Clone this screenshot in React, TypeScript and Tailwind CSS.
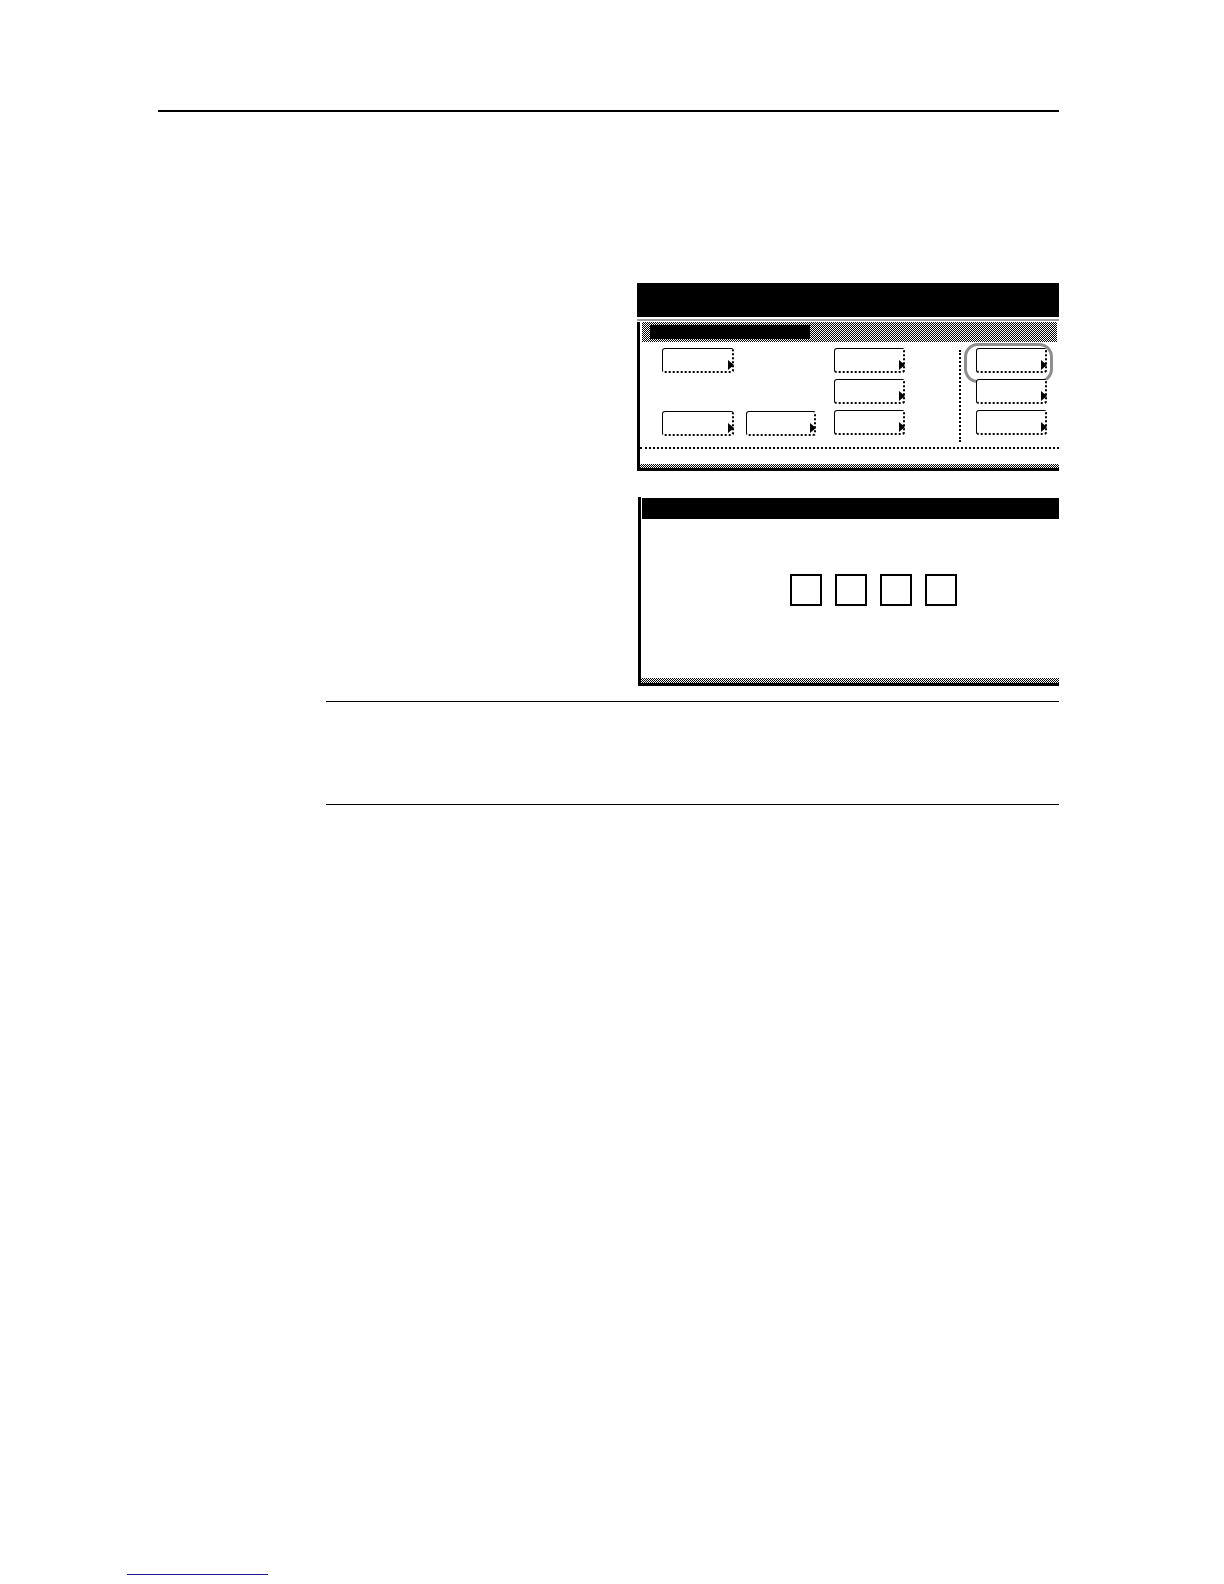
const checker =
  'bg-[image:repeating-conic-gradient(#000_0%_25%,#fff_0%_50%)] bg-[length:2px_2px]';

function Key({ w = 'w-[72px]', highlight = false }: { w?: string; highlight?: boolean }) {
  return (
    <div
      className={`relative h-[25px] ${w} rounded-[3px] border border-black border-b-2 border-r-2 bg-white [border-bottom-style:dotted] [border-right-style:dotted]`}
    >
      <span className="absolute right-[-2px] bottom-[1px] h-0 w-0 border-y-[5px] border-l-[6px] border-y-transparent border-l-black" />
      {highlight && (
        <span className="absolute left-[-13px] top-[-6px] h-[40px] w-[89px] rounded-[14px] border-[3px] border-[#8e8e8e]" />
      )}
    </div>
  );
}

function MenuScreen() {
  return (
    <div className="flex h-[188px] flex-col">
      <div className="h-[34px] bg-black" />
      <div className="h-[2px]" />
      <div className="h-[2px] bg-[#9a9a9a]" />
      <div className="h-[1px]" />
      <div className="flex flex-1 flex-col border-l-[3px] border-black">
        <div className={`mx-[2px] flex h-[20px] items-center ${checker}`}>
          <div className="ml-[8px] h-[14px] w-[160px] bg-black" />
        </div>
        <div className="flex h-[105px] items-start pt-[6px]">
          <div className="ml-[22px] flex flex-col gap-[38px]">
            <Key />
            <Key />
          </div>
          <div className="ml-[12px] mt-[63px]">
            <Key w="w-[70px]" />
          </div>
          <div className="ml-[18px] flex flex-col gap-[6px]">
            <Key w="w-[71px]" />
            <Key w="w-[71px]" />
            <Key w="w-[71px]" />
          </div>
          <div className="ml-[54px] mt-[2px] h-[92px] border-l-2 border-dotted border-black" />
          <div className="ml-[15px] flex flex-col gap-[6px]">
            <Key w="w-[71px]" highlight />
            <Key w="w-[71px]" />
            <Key w="w-[71px]" />
          </div>
        </div>
        <div className="h-[2px] border-t-2 border-dotted border-black" />
        <div className="flex-1" />
        <div className={`h-[4px] ${checker}`} />
        <div className="h-[3px] bg-black" />
      </div>
    </div>
  );
}

function CodeScreen() {
  return (
    <div className="flex h-[189px] flex-col border-l-[3px] border-black">
      <div className="mt-[1px] ml-[1px] h-[21px] bg-black" />
      <div className="flex flex-1 items-start pl-[149px] pt-[55px]">
        <div className="flex gap-[13px]">
          {[0, 1, 2, 3].map((i) => (
            <div key={i} className="h-[32px] w-[32px] border-2 border-black bg-white" />
          ))}
        </div>
      </div>
      <div className={`h-[5px] ${checker}`} />
      <div className="h-[3px] bg-black" />
    </div>
  );
}

export default function App() {
  return (
    <div className="flex h-screen w-full flex-col overflow-hidden bg-white font-['Liberation_Sans',sans-serif]">
      <div className="pl-[158px] pr-[165px] pt-[110px]">
        <div className="h-[2px] bg-black" />
      </div>

      <div className="ml-[637px] mr-[165px] mt-[171px]">
        <MenuScreen />
      </div>

      <div className="ml-[638px] mr-[165px] mt-[26px]">
        <CodeScreen />
      </div>

      <div className="ml-[326px] mr-[165px] mt-[15px] h-px shrink-0 bg-black" />
      <div className="ml-[326px] mr-[165px] mt-[102px] h-px shrink-0 bg-black" />

      <div className="mb-[9px] ml-[127px] mt-auto h-px w-[141px] shrink-0 bg-[#1c1c8f]" />
    </div>
  );
}
